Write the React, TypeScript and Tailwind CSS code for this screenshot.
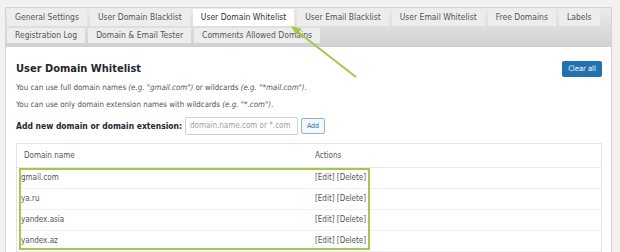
import React from 'react';

const row1 = [
  'General Settings',
  'User Domain Blacklist',
  'User Domain Whitelist',
  'User Email Blacklist',
  'User Email Whitelist',
  'Free Domains',
  'Labels',
];
const row2 = ['Registration Log', 'Domain & Email Tester', 'Comments Allowed Domains'];
const domains = ['gmail.com', 'ya.ru', 'yandex.asia', 'yandex.az'];

function Tab({ label, active }: { label: string; active?: boolean }) {
  return (
    <div
      className={
        active
          ? 'h-full px-[8px] flex items-center bg-white text-[#333] text-[8.5px] whitespace-nowrap'
          : 'h-full px-[8px] flex items-center bg-[#ededed] text-[#555] text-[8.5px] whitespace-nowrap'
      }
    >
      {label}
    </div>
  );
}

export default function App() {
  return (
    <div className="relative w-[620px] h-[252px] overflow-hidden bg-[#f1f1f1] pt-[7px] pl-[5px] pr-[8px] font-['DejaVu_Sans_Condensed','DejaVu_Sans',sans-serif]">
      <div className="h-[260px] border border-[#d4d4d4] bg-white">
        {/* Tab bar */}
        <div className="h-[39px] pt-[1px] pl-[1px] flex flex-col gap-[2px] bg-gradient-to-b from-[#ebebeb] to-[#d0d0d0]">
          <div className="h-[17px] flex gap-[3px]">
            {row1.map((t) => (
              <Tab key={t} label={t} active={t === 'User Domain Whitelist'} />
            ))}
          </div>
          <div className="h-[15px] flex gap-[3px]">
            {row2.map((t) => (
              <Tab key={t} label={t} />
            ))}
          </div>
        </div>

        <div className="pl-[10px] pr-[9px]">
          <div className="mt-[12px] h-[20px] flex items-center justify-between">
            <h2 className="text-[11px] font-bold text-[#23282d]">User Domain Whitelist</h2>
            <button className="h-[16px] w-[40px] rounded-[2px] bg-[#2271b1] text-white text-[7.5px] flex items-center justify-center">
              Clear all
            </button>
          </div>

          <p className="mt-[4px] h-[10px] leading-[10px] text-[7.9px] text-[#555]">
            You can use full domain names <i>(e.g. "gmail.com")</i> or wildcards <i>(e.g. "*mail.com")</i>.
          </p>
          <p className="mt-[7px] h-[10px] leading-[10px] text-[7.9px] text-[#555]">
            You can use only domain extension names with wildcards <i>(e.g. "*.com")</i>.
          </p>

          <div className="mt-[7px] h-[18px] flex items-center">
            <span className="text-[8.5px] font-bold text-[#23282d] w-[169px]">
              Add new domain or domain extension:
            </span>
            <div className="h-[18px] w-[113px] border border-[#d0d0d0] rounded-[2px] flex items-center pl-[4px] overflow-hidden">
              <span className="text-[8px] text-[#a0a0a0] whitespace-nowrap">domain.name.com or *.com</span>
            </div>
            <button className="ml-[3px] h-[16px] w-[24px] border border-[#8fb3d6] rounded-[2px] bg-[#f6f7f7] text-[#2271b1] text-[7px] flex items-center justify-center">
              Add
            </button>
          </div>

          {/* Table */}
          <div className="mt-[8px] border border-[#e3e3e3] text-[8px] text-[#555]">
            <div className="h-[24px] flex items-center border-b border-[#e8e8e8]">
              <div className="w-[298px] pl-[7px]">Domain name</div>
              <div>Actions</div>
            </div>
            {domains.map((d) => (
              <div key={d} className="h-[21px] flex items-center border-b border-[#f0f0f0]">
                <div className="w-[298px] pl-[4px]">{d}</div>
                <div>[Edit] [Delete]</div>
              </div>
            ))}
          </div>
        </div>
      </div>

      {/* annotation overlay */}
      <div className="absolute left-[19px] top-[168px] w-[351px] h-[82px] border-2 border-[#a3c94a]" />
      <svg className="absolute left-0 top-0" width="620" height="252" viewBox="0 0 620 252">
        <line x1="294" y1="29" x2="356" y2="77" stroke="#a3c94a" strokeWidth="2" />
        <polygon points="291,26 302,29 296,35" fill="#a3c94a" />
      </svg>
    </div>
  );
}
